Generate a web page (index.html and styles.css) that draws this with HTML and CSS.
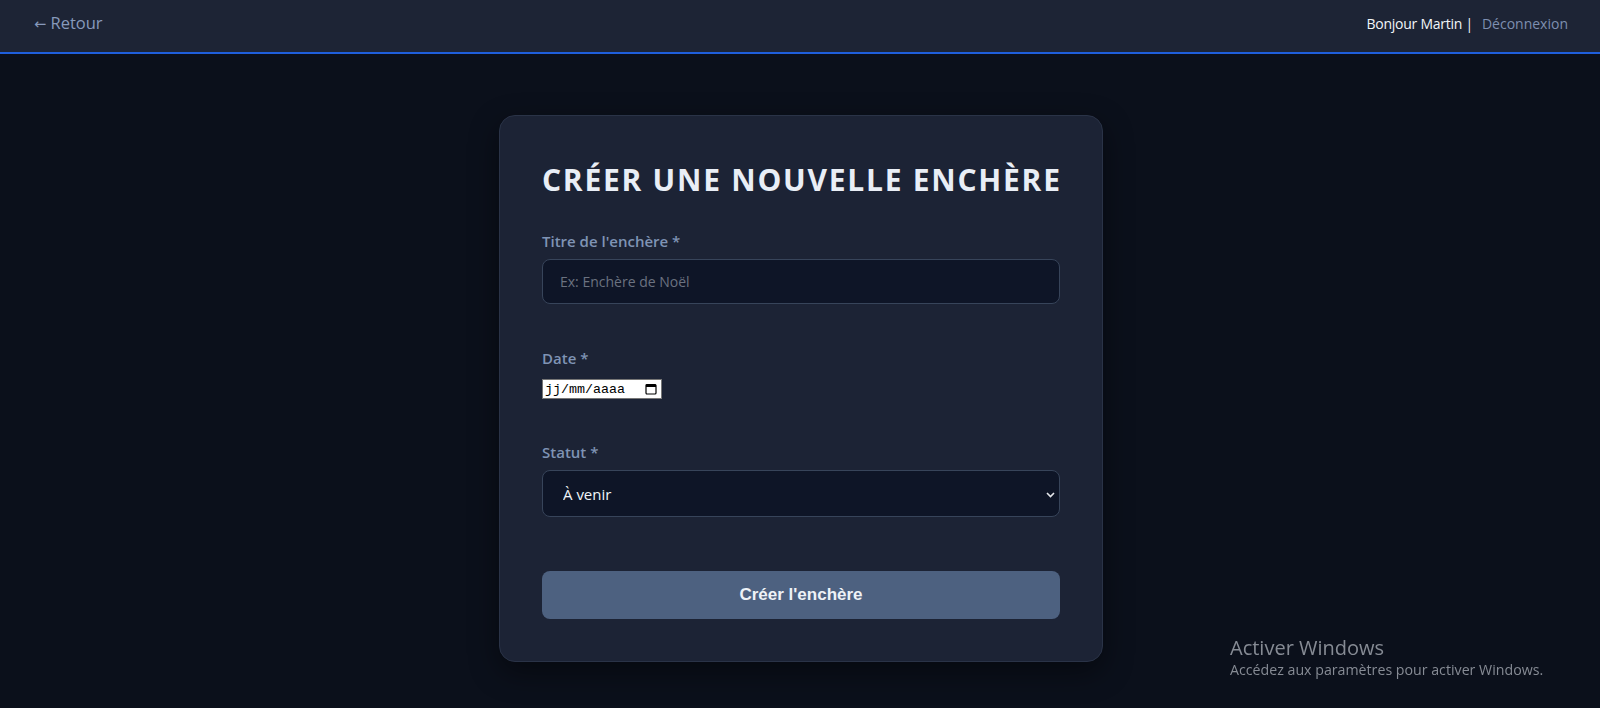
FILE: index.html
```html
<!DOCTYPE html>
<html lang="fr">
<head>
  <meta charset="UTF-8">
  <meta name="viewport" content="width=device-width, initial-scale=1.0">
  <title>Créer une nouvelle enchère</title>
  <link rel="stylesheet" href="styles.css">
</head>
<body>

  <!-- Top bar -->
  <header class="topbar">
    <a href="#" class="back-link"><span class="arrow">&larr;</span> Retour</a>
    <div class="user-box">
      <span class="hello">Bonjour Martin |</span>
      <a href="#" class="logout">Déconnexion</a>
    </div>
  </header>

  <main class="page">
    <div class="card">
      <h1 class="card-title">Créer une nouvelle enchère</h1>

      <div class="form-group">
        <label for="titre">Titre de l'enchère *</label>
        <input type="text" id="titre" class="field" placeholder="Ex: Enchère de Noël">
      </div>

      <div class="form-group date-group">
        <label>Date *</label>
        <div class="date-input">
          <span class="date-text">jj/mm/aaaa</span>
          <svg class="date-icon" width="12" height="12" viewBox="0 0 12 12">
            <rect x="1" y="1.5" width="10" height="9.5" rx="1" fill="none" stroke="#000" stroke-width="1.2"/>
            <rect x="1" y="1.5" width="10" height="2.5" fill="#000"/>
          </svg>
        </div>
      </div>

      <div class="form-group">
        <label for="statut">Statut *</label>
        <div class="select-wrap">
          <select id="statut" class="field select">
            <option>À venir</option>
            <option>En cours</option>
            <option>Terminée</option>
          </select>
          <svg class="chevron" width="9" height="6" viewBox="0 0 9 6">
            <path d="M1 1 L4.5 4.5 L8 1" fill="none" stroke="#e5e7eb" stroke-width="1.6"/>
          </svg>
        </div>
      </div>

      <button class="submit-btn">Créer l'enchère</button>
    </div>
  </main>

  <div class="activate">
    <div class="activate-title">Activer Windows</div>
    <div class="activate-sub">Accédez aux paramètres pour activer Windows.</div>
  </div>

</body>
</html>
```

FILE: styles.css
```css
body { margin: 0; background: #0b101b; font-family: "Open Sans", "Noto Sans", sans-serif; color: #e2e8f0; height: 708px; overflow: hidden; }
a { text-decoration: none; }

.topbar { box-sizing: border-box; height: 54px; background: #1d2435; border-bottom: 2px solid #1f5fdc; display: flex; align-items: center; justify-content: space-between; padding: 0 32px 5px 34px; }
.back-link { color: #8799bb; font-size: 16.5px; line-height: 22px; }
.back-link .arrow { font-family: "DejaVu Sans", sans-serif; font-size: 14.5px; }
.user-box { display: flex; align-items: center; gap: 9px; font-size: 14px; line-height: 20px; }
.hello { color: #f1f5f9; letter-spacing: -0.25px; }
.logout { color: #7d8fb0; }

.page { display: flex; justify-content: center; padding: 61px 0 0 2px; }
.card { width: 604px; box-sizing: border-box; background: #1c2335; border: 1px solid #2a3347; border-radius: 16px; padding: 42px; box-shadow: 0 10px 30px rgba(0, 0, 0, 0.45); }
.card-title { margin: 2px 0 31px; font-size: 30px; line-height: 40px; font-weight: 700; text-transform: uppercase; letter-spacing: 1.75px; white-space: nowrap; color: #e9eef6; }

.form-group { margin-bottom: 44px; }
.form-group label { display: block; font-size: 15px; line-height: 20px; font-weight: 600; color: #7f93b4; margin-bottom: 8px; }
.date-group { margin-bottom: 43px; }

.field { display: block; width: 100%; box-sizing: border-box; height: 45px; background: #0e1527; border: 1px solid #37445a; border-radius: 8px; color: #f1f5f9; font-family: "Open Sans", "Noto Sans", sans-serif; font-size: 14px; padding: 0 17px; outline: none; }
.field::placeholder { color: #6b7280; }

.date-input { margin-top: 11px; width: 120px; height: 20px; box-sizing: border-box; background: #fff; border: 1px solid #767676; display: flex; align-items: center; justify-content: space-between; padding: 0 4px 0 2px; }
.date-text { font-family: "Liberation Mono", monospace; font-size: 13.33px; color: #000; }
.date-icon { display: block; }

.select-wrap { position: relative; }
.select { height: 47px; appearance: none; -webkit-appearance: none; padding: 0 20px; font-size: 15px; margin-top: 1px; }
.chevron { position: absolute; right: 5px; top: 22px; }

.submit-btn { display: block; width: 100%; height: 48px; margin-top: 54px; background: #4d6180; border: none; border-radius: 8px; color: #eef2f7; font-family: "Liberation Sans", Arial, sans-serif; font-size: 17px; font-weight: 700; cursor: pointer; }

.activate { position: fixed; left: 1230px; top: 635px; color: #868b94; }
.activate-title { font-size: 20px; line-height: 25px; }
.activate-sub { font-size: 14.2px; line-height: 20px; }
```
